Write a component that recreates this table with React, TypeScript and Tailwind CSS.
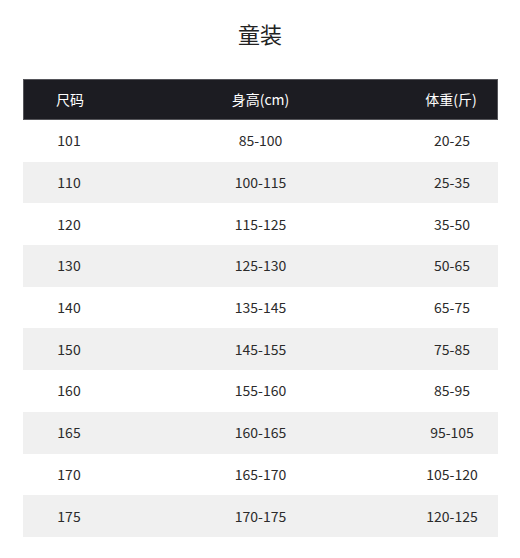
const rows = [
  ["101", "85-100", "20-25"],
  ["110", "100-115", "25-35"],
  ["120", "115-125", "35-50"],
  ["130", "125-130", "50-65"],
  ["140", "135-145", "65-75"],
  ["150", "145-155", "75-85"],
  ["160", "155-160", "85-95"],
  ["165", "160-165", "95-105"],
  ["170", "165-170", "105-120"],
  ["175", "170-175", "120-125"],
];

export default function App() {
  return (
    <div
      className="w-[520px] h-[558px] bg-white text-[#2b2b2b]"
      style={{ fontFamily: '"Noto Sans CJK SC", "Noto Sans", sans-serif' }}
    >
      <h1 className="pt-[18px] text-center text-[22px] leading-[30px] font-normal text-[#222]">童装</h1>
      <div className="mt-[31px] ml-[23px] w-[475px]">
        <div className="grid grid-cols-[92px_1fr_92px] h-[41px] items-center bg-[#1c1c22] text-white text-[14px] border border-[#55555a]">
          <div className="text-center">尺码</div>
          <div className="text-center">身高(cm)</div>
          <div className="text-center">体重(斤)</div>
        </div>
        {rows.map((r, i) => (
          <div
            key={r[0]}
            className={
              "grid grid-cols-[92px_1fr_92px] h-[41.7px] items-center text-[14px] " +
              (i % 2 === 1 ? "bg-[#f0f0f0]" : "bg-white")
            }
          >
            <div className="text-center">{r[0]}</div>
            <div className="text-center">{r[1]}</div>
            <div className="text-center">{r[2]}</div>
          </div>
        ))}
      </div>
    </div>
  );
}
